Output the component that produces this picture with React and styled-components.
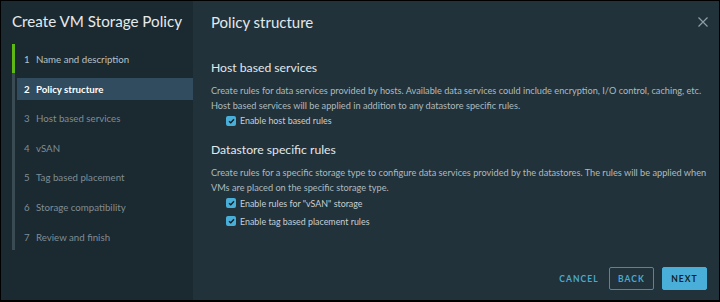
import React from "react";
import styled, { createGlobalStyle } from "styled-components";

const Global = createGlobalStyle`
  html, body { margin: 0; padding: 0; background: #000; }
  body { font-family: Lato, "Noto Sans", sans-serif; }
`;

const Frame = styled.div`
  width: 718px;
  height: 299px;
  border: 1px solid #000;
  border-bottom-width: 2px;
  display: flex;
  overflow: hidden;
`;

const Sidebar = styled.aside`
  width: 192px;
  flex: none;
  background: #1b2930;
  display: flex;
  flex-direction: column;
`;

const WizardTitle = styled.h1`
  margin: 0;
  padding: 11px 0 0 11px;
  height: 32px;
  font-size: 15.2px;
  font-weight: 400;
  color: #e6eaec;
  white-space: nowrap;
  line-height: 18px;
`;

const Steps = styled.ol`
  list-style: none;
  margin: 0;
  padding: 4px 0 0 11px;
  display: flex;
  flex-direction: column;
  gap: 7.6px;
  position: relative;
  &::before {
    content: "";
    position: absolute;
    left: 11px;
    top: 0;
    width: 3px;
    height: 206px;
    background: #3b4b53;
  }
  &::after {
    content: "";
    position: absolute;
    left: 11px;
    top: 0;
    width: 3px;
    height: 29px;
    background: #5eb715;
  }
`;

const Step = styled.li`
  height: 22px;
  margin-left: 5px;
  display: flex;
  align-items: center;
  padding-left: 7px;
  font-size: 9.7px;
  color: ${(p) => (p.$active ? "#ffffff" : p.$done ? "#b7c2c7" : "#7f8e95")};
  font-weight: ${(p) => (p.$active ? 700 : 400)};
  background: ${(p) => (p.$active ? "#304c5e" : "transparent")};
  white-space: nowrap;
`;

const StepNum = styled.span`
  width: 12px;
  flex: none;
`;

const Main = styled.main`
  flex: 1;
  background: #21323a;
  display: flex;
  flex-direction: column;
  padding: 0 0 0 18px;
`;

const Header = styled.header`
  display: flex;
  align-items: center;
  justify-content: space-between;
  height: 41px;
  padding-right: 8px;
`;

const PageTitle = styled.h2`
  margin: 0;
  font-size: 15px;
  font-weight: 400;
  color: #e3e8ea;
`;

const Close = styled.button`
  background: none;
  border: 0;
  padding: 0;
  width: 14px;
  height: 14px;
  margin-top: 2px;
  display: flex;
  color: #8e9ea5;
`;

const Section = styled.section`
  display: flex;
  flex-direction: column;
  padding-top: ${(p) => p.$top}px;
`;

const SectionTitle = styled.h3`
  margin: 0 0 6px;
  font-size: 12.2px;
  font-weight: 400;
  color: #e3e8ea;
  line-height: 18px;
`;

const Para = styled.p`
  margin: 0;
  font-size: 9.2px;
  line-height: 15px;
  color: #aebabf;
  max-width: 502px;
`;

const CheckRow = styled.label`
  display: flex;
  align-items: center;
  gap: 4px;
  margin-left: 15px;
  height: ${(p) => p.$h || 16}px;
  margin-top: ${(p) => p.$mt || 0}px;
  font-size: 8.9px;
  color: #c6cfd3;
`;

const Box = styled.span`
  width: 10px;
  height: 10px;
  border-radius: 2px;
  background: #49afd9;
  display: flex;
  align-items: center;
  justify-content: center;
`;

const Footer = styled.footer`
  margin-top: auto;
  display: flex;
  justify-content: flex-end;
  align-items: center;
  gap: 8px;
  padding: 0 12px 10px 0;
`;

const Btn = styled.button`
  height: 23px;
  width: ${(p) => (p.$variant === "flat" ? 44 : 45)}px;
  padding: 0;
  font-family: Lato, "Noto Sans", sans-serif;
  font-size: 8.5px;
  font-weight: 700;
  letter-spacing: 1.1px;
  border-radius: 2px;
  border: 1px solid ${(p) => (p.$variant === "outline" ? "#3a8fb5" : p.$variant === "primary" ? "#49afd9" : "transparent")};
  background: ${(p) => (p.$variant === "primary" ? "#49afd9" : "transparent")};
  color: ${(p) => (p.$variant === "primary" ? "#0f1e24" : "#4aa9d3")};
`;

const Check = () => (
  <Box>
    <svg width="7" height="6" viewBox="0 0 7 6">
      <path d="M1 3.2 L2.8 4.8 L6 1.2" fill="none" stroke="#11202a" strokeWidth="1.4" />
    </svg>
  </Box>
);

const steps = [
  "Name and description",
  "Policy structure",
  "Host based services",
  "vSAN",
  "Tag based placement",
  "Storage compatibility",
  "Review and finish",
];

export default function App() {
  return (
    <>
      <Global />
      <Frame>
        <Sidebar>
          <WizardTitle>Create VM Storage Policy</WizardTitle>
          <Steps>
            {steps.map((s, i) => (
              <Step key={s} $active={i === 1} $done={i === 0}>
                <StepNum>{i + 1}</StepNum>
                {s}
              </Step>
            ))}
          </Steps>
        </Sidebar>
        <Main>
          <Header>
            <PageTitle>Policy structure</PageTitle>
            <Close aria-label="Close">
              <svg width="12" height="12" viewBox="0 0 12 12">
                <path d="M1.5 1.5 L10.5 10.5 M10.5 1.5 L1.5 10.5" stroke="#8e9ea5" strokeWidth="1.2" />
              </svg>
            </Close>
          </Header>
          <Section $top={17}>
            <SectionTitle>Host based services</SectionTitle>
            <Para>
              Create rules for data services provided by hosts. Available data services could include encryption, I/O control, caching, etc.
              <br />
              Host based services will be applied in addition to any datastore specific rules.
            </Para>
            <CheckRow $h={15}>
              <Check />
              Enable host based rules
            </CheckRow>
          </Section>
          <Section $top={13}>
            <SectionTitle>Datastore specific rules</SectionTitle>
            <Para>
              Create rules for a specific storage type to configure data services provided by the datastores. The rules will be applied when VMs are placed on the specific storage type.
            </Para>
            <CheckRow $h={16}>
              <Check />
              Enable rules for "vSAN" storage
            </CheckRow>
            <CheckRow $h={16} $mt={2}>
              <Check />
              Enable tag based placement rules
            </CheckRow>
          </Section>
          <Footer>
            <Btn $variant="flat">CANCEL</Btn>
            <Btn $variant="outline">BACK</Btn>
            <Btn $variant="primary">NEXT</Btn>
          </Footer>
        </Main>
      </Frame>
    </>
  );
}
